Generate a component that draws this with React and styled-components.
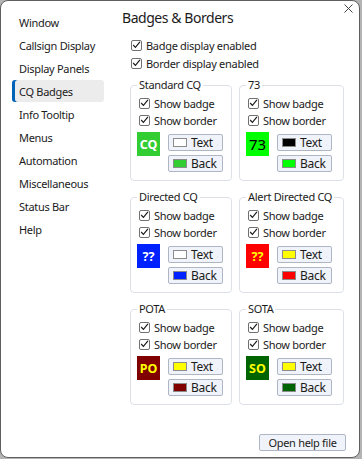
import React from 'react';
import styled, { createGlobalStyle } from 'styled-components';

const GlobalStyle = createGlobalStyle`
    html, body {
        margin: 0;
        padding: 0;
        background: #b4b4b4;
    }
    body {
        font-family: 'Noto Sans', 'Open Sans', sans-serif;
        font-size: 11px;
        letter-spacing: -0.3px;
        color: #1b1b1b;
    }
    * {
        box-sizing: border-box;
    }
`;

const navItems = [
    'Window',
    'Callsign Display',
    'Display Panels',
    'CQ Badges',
    'Info Tooltip',
    'Menus',
    'Automation',
    'Miscellaneous',
    'Status Bar',
    'Help',
];

const badges = [
    { title: 'Standard CQ', label: 'CQ', fg: '#ffffff', bg: '#32cd32', bold: true },
    { title: '73', label: '73', fg: '#000000', bg: '#00ff00', bold: false },
    { title: 'Directed CQ', label: '??', fg: '#ffffff', bg: '#0022ff', bold: true },
    { title: 'Alert Directed CQ', label: '??', fg: '#ffff00', bg: '#ff0000', bold: true },
    { title: 'POTA', label: 'PO', fg: '#ffff00', bg: '#800000', bold: true },
    { title: 'SOTA', label: 'SO', fg: '#ffff00', bg: '#006400', bold: true },
];

function CheckBox({ label }) {
    return (
        <CheckRow>
            <Box>
                <svg width="10" height="10" viewBox="0 0 10 10">
                    <path d="M1.3 5 L3.8 7.6 L8.8 1.4" fill="none" stroke="#1b1b1b" strokeWidth="1.3" />
                </svg>
            </Box>
            <span>{label}</span>
        </CheckRow>
    );
}

function ColorButton({ label, color }) {
    return (
        <PickButton>
            <Swatch style={{ background: color }} />
            <span>{label}</span>
            <Chevron width="5" height="4" viewBox="0 0 5 4">
                <path d="M0.5 0.8 L2.5 2.8 L4.5 0.8" fill="none" stroke="#333" strokeWidth="0.9" />
            </Chevron>
        </PickButton>
    );
}

function BadgeGroup({ title, label, fg, bg, bold }) {
    return (
        <Group>
            <Legend>{title}</Legend>
            <CheckList>
                <CheckBox label="Show badge" />
                <CheckBox label="Show border" />
            </CheckList>
            <BadgeRow>
                <Badge $fg={fg} $bg={bg} $bold={bold}>{label}</Badge>
                <ButtonStack>
                    <ColorButton label="Text" color={fg} />
                    <ColorButton label="Back" color={bg} />
                </ButtonStack>
            </BadgeRow>
        </Group>
    );
}

export default function App() {
    return (
        <>
            <GlobalStyle />
            <Window>
                <Main>
                    <Sidebar>
                        {navItems.map(item => (
                            <NavItem key={item} $active={item === 'CQ Badges'}>{item}</NavItem>
                        ))}
                    </Sidebar>
                    <Content>
                        <Header>
                            <Heading>Badges &amp; Borders</Heading>
                            <Close>
                                <svg width="9" height="9" viewBox="0 0 9 9">
                                    <path d="M0.5 0.5 L8.5 8.5 M8.5 0.5 L0.5 8.5" stroke="#444" strokeWidth="1" />
                                </svg>
                            </Close>
                        </Header>
                        <GlobalChecks>
                            <CheckBox label="Badge display enabled" />
                            <CheckBox label="Border display enabled" />
                        </GlobalChecks>
                        <GroupGrid>
                            {badges.map(b => <BadgeGroup key={b.title} {...b} />)}
                        </GroupGrid>
                    </Content>
                </Main>
                <Footer>
                    <HelpButton>Open help file</HelpButton>
                </Footer>
            </Window>
        </>
    );
}

const Window = styled.div`
    width: 360px;
    height: 458px;
    background: #ffffff;
    border: 1px solid #5e5e5e;
    border-radius: 8px;
    display: flex;
    flex-direction: column;
    overflow: hidden;
`;

const Main = styled.div`
    display: flex;
    flex: 1;
`;

const Sidebar = styled.nav`
    width: 105px;
    padding: 10px 0 0 11px;
    display: flex;
    flex-direction: column;
    gap: 1px;
`;

const NavItem = styled.div`
    width: 92px;
    height: 22px;
    display: flex;
    align-items: center;
    padding-left: 7px;
    border-radius: 3px;
    background: ${p => p.$active ? '#ececec' : 'transparent'};
    box-shadow: ${p => p.$active ? 'inset 3px 0 0 #0063b8' : 'none'};
`;

const Content = styled.main`
    flex: 1;
    display: flex;
    flex-direction: column;
    padding: 7px 6px 0 16px;
`;

const Header = styled.div`
    display: flex;
    justify-content: space-between;
    align-items: flex-start;
`;

const Heading = styled.h1`
    margin: 0;
    font-size: 14px;
    line-height: 20px;
    font-weight: 400;
    letter-spacing: -0.45px;
`;

const Close = styled.div`
    margin-top: -4px;
    width: 9px;
    height: 9px;
    display: flex;
`;

const GlobalChecks = styled.div`
    display: flex;
    flex-direction: column;
    gap: 2px;
    margin: 9px 0 0 9px;
`;

const CheckRow = styled.label`
    display: flex;
    align-items: center;
    gap: 4px;
    height: 16px;
    white-space: nowrap;
`;

const Box = styled.span`
    width: 11px;
    height: 11px;
    border: 1px solid #707070;
    border-radius: 2px;
    background: #fff;
    display: flex;
    align-items: center;
    justify-content: center;
`;

const GroupGrid = styled.div`
    display: grid;
    grid-template-columns: 102px 105px;
    column-gap: 7px;
    row-gap: 8px;
    margin: 6px 0 0 8px;
`;

const Group = styled.fieldset`
    margin: 0;
    min-width: 0;
    padding: 2px 8px 8px;
    border: 1px solid #dde0e6;
    border-radius: 4px;
`;

const Legend = styled.legend`
    padding: 0 2px;
    margin-left: -2px;
    line-height: 16px;
    white-space: nowrap;
`;

const CheckList = styled.div`
    display: flex;
    flex-direction: column;
    gap: 1px;
`;

const BadgeRow = styled.div`
    display: flex;
    align-items: flex-start;
    gap: 8px;
    margin-top: 4px;
`;

const Badge = styled.div`
    width: 23px;
    height: 24px;
    margin-left: -2px;
    display: flex;
    align-items: center;
    justify-content: center;
    letter-spacing: 0;
    background: ${p => p.$bg};
    color: ${p => p.$fg};
    font-weight: ${p => p.$bold ? 700 : 400};
    font-size: ${p => p.$bold ? '12.5px' : '15px'};
`;

const ButtonStack = styled.div`
    display: flex;
    flex-direction: column;
    gap: 4px;
    margin-top: 2px;
`;

const PickButton = styled.div`
    width: 55px;
    height: 17px;
    display: flex;
    align-items: center;
    gap: 4px;
    padding: 0 4px;
    font-size: 12px;
    background: #f0f3f9;
    border: 1px solid #aeb5c4;
    border-radius: 2px;
`;

const Swatch = styled.span`
    width: 14px;
    height: 9px;
    border: 1px solid #8c8c8c;
    flex-shrink: 0;
`;

const Chevron = styled.svg`
    margin-left: auto;
    margin-top: 4px;
`;

const Footer = styled.div`
    display: flex;
    justify-content: flex-end;
    padding: 0 13px 6px 0;
`;

const HelpButton = styled.div`
    width: 87px;
    height: 17px;
    display: flex;
    align-items: center;
    justify-content: center;
    background: #f0f3f9;
    border: 1px solid #aeb5c4;
    border-radius: 2px;
`;
